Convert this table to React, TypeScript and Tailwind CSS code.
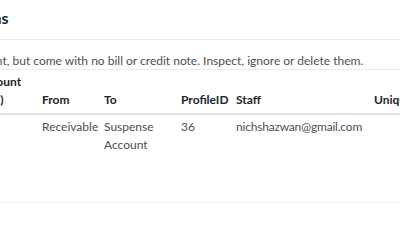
import React from "react";

const rows = [
    {
        amount: "",
        from: "Receivable",
        to: "Suspense Account",
        profileId: "36",
        staff: "nichshazwan@gmail.com",
        unique: "",
    },
];

export default function App() {
    return (
        <div className="w-[400px] h-[250px] overflow-hidden bg-white text-[#212529] font-['Lato','Liberation_Sans',sans-serif] text-[12px] leading-[18px]">
            {/* Modal header */}
            <div className="h-[40px] pb-[3px] border-b border-[#e9ecef] flex items-center">
                <h5 className="-ml-[156px] whitespace-nowrap text-[16px] font-bold">
                    Orphaned Transactions
                </h5>
            </div>

            {/* Modal body */}
            <p className="-ml-[218px] mt-[12px] mb-[0px] whitespace-nowrap text-[#495057]">
                These transactions are linked to a payment, but come with no bill or credit note. Inspect, ignore or delete them.
            </p>

            <table className="table-fixed border-collapse -ml-[27px] -mt-[1px] w-[560px] text-left">
                <colgroup>
                    <col className="w-[64px]" />
                    <col className="w-[62px]" />
                    <col className="w-[77px]" />
                    <col className="w-[55px]" />
                    <col className="w-[138px]" />
                    <col className="w-[164px]" />
                </colgroup>
                <thead>
                    <tr className="align-bottom">
                        <th className="px-[5px] pt-[3px] pb-[4px] border-t border-[#e9ecef] border-b-2 border-b-[#dee2e6] font-bold">
                            Amount (RM)
                        </th>
                        <th className="px-[5px] pt-[3px] pb-[4px] border-t border-[#e9ecef] border-b-2 border-b-[#dee2e6] font-bold">
                            From
                        </th>
                        <th className="px-[5px] pt-[3px] pb-[4px] border-t border-[#e9ecef] border-b-2 border-b-[#dee2e6] font-bold">
                            To
                        </th>
                        <th className="px-[5px] pt-[3px] pb-[4px] border-t border-[#e9ecef] border-b-2 border-b-[#dee2e6] font-bold">
                            ProfileID
                        </th>
                        <th className="px-[5px] pt-[3px] pb-[4px] border-t border-[#e9ecef] border-b-2 border-b-[#dee2e6] font-bold">
                            Staff
                        </th>
                        <th className="px-[5px] pt-[3px] pb-[4px] border-t border-[#e9ecef] border-b-2 border-b-[#dee2e6] font-bold whitespace-nowrap">
                            Unique Reference
                        </th>
                    </tr>
                </thead>
                <tbody>
                    {rows.map((r, i) => (
                        <tr key={i} className="align-top text-[#495057] border-b border-[#f3f3f3]">
                            <td className="px-[5px] pt-[3px] pb-[4px] h-[88px]">{r.amount}</td>
                            <td className="px-[5px] pt-[3px] pb-[4px] whitespace-nowrap">{r.from}</td>
                            <td className="px-[5px] pt-[3px] pb-[4px]">{r.to}</td>
                            <td className="px-[5px] pt-[3px] pb-[4px]">{r.profileId}</td>
                            <td className="px-[5px] pt-[3px] pb-[4px] whitespace-nowrap tracking-[-0.2px]">{r.staff}</td>
                            <td className="px-[5px] pt-[3px] pb-[4px]">{r.unique}</td>
                        </tr>
                    ))}
                </tbody>
            </table>
        </div>
    );
}
